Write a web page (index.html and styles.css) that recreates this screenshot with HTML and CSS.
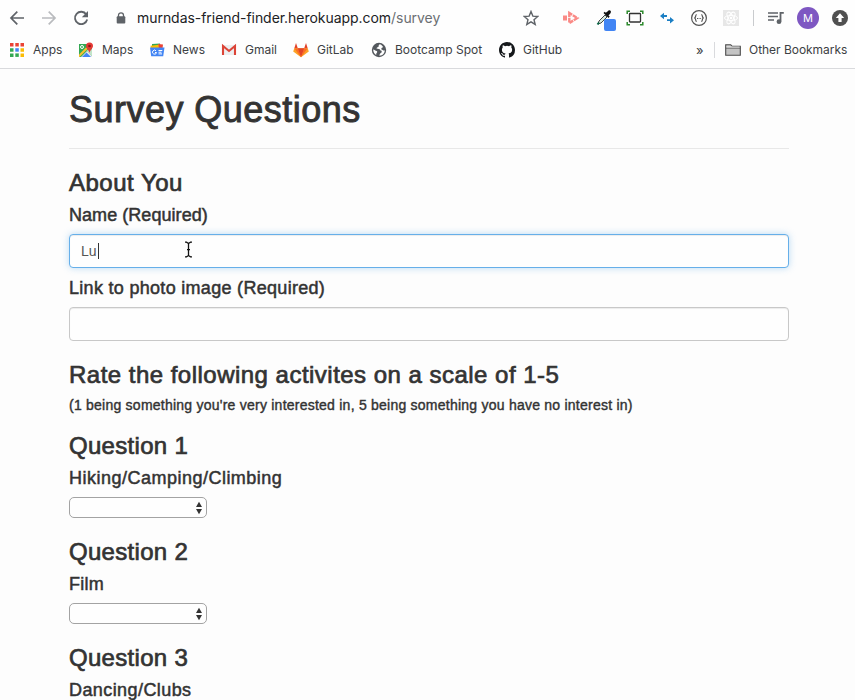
FILE: index.html
```html
<!DOCTYPE html>
<html lang="en">
<head>
<meta charset="utf-8">
<title>Survey</title>
<link rel="stylesheet" href="styles.css">
</head>
<body>
<header class="chrome">
  <div class="toolbar">
    <span class="cell"><svg width="16" height="16" viewBox="0 0 16 16" fill="none" stroke="#5f6368" stroke-width="1.7"><path d="M15 8H2.500M8.300 1.700 2 8l6.300 6.300"/></svg></span>
    <span class="cell"><svg width="16" height="16" viewBox="0 0 16 16" fill="none" stroke="#b9bbbe" stroke-width="1.7"><path d="M1 8h12.500M7.700 1.700 14 8l-6.300 6.300"/></svg></span>
    <span class="cell"><svg width="16" height="16" viewBox="0 0 16 16"><path d="M13.300 4.400A6.200 6.200 0 1 0 14.200 9.500" fill="none" stroke="#5f6368" stroke-width="1.800"/><path d="M15 1v6.200H8.800z" fill="#5f6368"/></svg></span>
    <span class="lock"><svg width="10" height="12" viewBox="0 0 10 12"><path d="M2.500 5V3.300a2.500 2.500 0 0 1 5 0V5" fill="none" stroke="#5f6368" stroke-width="1.300"/><rect x="0.700" y="4.300" width="8.600" height="7.200" rx="1" fill="#5f6368"/></svg></span>
    <span class="url">murndas-friend-finder.herokuapp.com<span class="path">/survey</span></span>
    <span class="cell star"><svg width="16" height="16" viewBox="0 0 16 16"><path d="m8 1.500 1.850 4.600 4.950.35-3.800 3.200 1.200 4.800L8 11.800l-4.200 2.650L5 9.650l-3.800-3.200 4.950-.35z" fill="none" stroke="#5f6368" stroke-width="1.400"/></svg></span>
    <span class="cell"><svg width="18" height="16" viewBox="0 0 18 16"><path d="M1 5.500h4v5H1z" fill="#fa8a86"/><path d="M7.300 3v10L15.300 8z" fill="none" stroke="#fa8a86" stroke-width="2.400" stroke-dasharray="4.300 .8"/></svg></span>
    <span class="cell picker"><svg width="22" height="24" viewBox="0 0 22 24"><path d="m2 16 1-3 6-6 2 2-6 6z" fill="#d7eadf" stroke="#444" stroke-width="1"/><path d="m1.500 16.500 1.500-2" stroke="#0b6848" stroke-width="2"/><path d="m7.500 5 5 5 1.200-1.400-1.200-1.200 2-2.200c1.500-1.800-.7-3.800-2.400-2.300L9.800 4.800 8.700 3.700z" fill="#111"/><rect x="8" y="11" width="12" height="12" rx="2" fill="#4285f4"/></svg></span>
    <span class="cell"><svg width="18" height="16" viewBox="0 0 18 16" fill="none"><rect x="3.500" y="3.500" width="11" height="8.500" rx=".7" stroke="#333" stroke-width="1.300"/><path d="M1.200 4V1.200H4M14 1.200h2.800V4M1.200 12v2.800H4M14 14.800h2.800V12" stroke="#2d8a2d" stroke-width="1.500"/></svg></span>
    <span class="cell"><svg width="16" height="14" viewBox="0 0 16 14" fill="#1c7fc4"><path d="m1 5 4-3.200v2.300h3v1.800H5v2.300zM15 9.200 11 6v2.300H8v1.800h3v2.300z"/></svg></span>
    <span class="cell"><svg width="18" height="18" viewBox="0 0 18 18" fill="none" stroke="#555" stroke-width="1.200"><circle cx="9" cy="9" r="7.400"/><path d="M6.700 5.500c-1.300 0-.6 2.300-1.900 3.500 1.300 1 .6 3.500 1.900 3.500M11.300 5.500c1.300 0 .6 2.300 1.900 3.500-1.300 1-.6 3.500-1.900 3.500M7 9.500h1M8.600 9.500h.9M10.200 9.500h.9"/></svg></span>
    <span class="cell"><svg width="16" height="16" viewBox="0 0 16 16"><path fill="#e7e7e7" d="M0 0h16v16H0z"/><g fill="none" stroke="#fff"><ellipse cx="8" cy="8" rx="6.500" ry="2.600"/><ellipse cx="8" cy="8" rx="6.500" ry="2.600" transform="rotate(60 8 8)"/><ellipse cx="8" cy="8" rx="6.500" ry="2.600" transform="rotate(120 8 8)"/></g><circle cx="8" cy="8" r="1.300" fill="#fff"/></svg></span>
    <span class="divider"></span>
    <span class="cell"><svg width="18" height="14" viewBox="0 0 18 14"><path d="M1 2h10M1 5.500h10M1 9h6" stroke="#5f6368" stroke-width="1.700"/><path d="M13.500 10.500V1.900h3.300" fill="none" stroke="#5f6368" stroke-width="1.800"/><circle cx="12" cy="10.700" r="2.400" fill="#5f6368"/></svg></span>
    <span class="cell"><span class="avatar">M</span></span>
    <span class="cell last"><svg width="16" height="16" viewBox="0 0 16 16"><circle cx="8" cy="8" r="8" fill="#505050"/><path d="M8 3.300 3.800 8h2.600v4h3.200V8h2.600z" fill="#fff"/></svg></span>
  </div>
  <nav class="bookmarks">
    <a class="bm apps"><svg width="16" height="16" viewBox="0 0 16 16"><path fill="#ea4335" d="M1 1h3.500v3.500H1zM6.300 1h3.500v3.500H6.300zM11.500 1H15v3.500h-3.500z"/><path fill="#34a853" d="M1 6.200h3.500v3.500H1zM1 11.400h3.500v3.500H1z"/><path fill="#4285f4" d="M6.300 6.200h3.500v3.500H6.300z"/><path fill="#34a853" d="M6.300 11.400h3.500v3.500H6.300z"/><path fill="#fbbc05" d="M11.500 6.200H15v3.500h-3.500zM11.500 11.400H15v3.500h-3.500z"/></svg><span>Apps</span></a>
    <a class="bm maps"><svg width="16" height="16" viewBox="0 0 16 16"><path fill="#34a853" d="M1 2h13v13H1z"/><path fill="#e8eaed" d="m3 15 6-6 5 5v1z"/><path fill="#4285f4" d="m4 15 4.500-4.500L13 15z"/><path fill="#fbc02d" d="m1 12.500 7-7 1.500 1.500-8 8H1z"/><path fill="#fff" d="m8.500 8.500 6 6V7z" opacity=".7"/><circle cx="4" cy="5" r="1.500" fill="none" stroke="#fff"/><path fill="#e53935" d="M11.500.5a3.500 3.500 0 0 1 3.500 3.500c0 2.500-2.600 3.200-3.500 7C10.600 7.200 8 6.500 8 4A3.500 3.500 0 0 1 11.500.5z"/><circle cx="11.500" cy="4" r="1.300" fill="#8b1710"/></svg><span>Maps</span></a>
    <a class="bm news"><svg width="16" height="16" viewBox="0 0 16 16"><path fill="#34a853" d="m3 2 8-.5.500 5H3z"/><path fill="#ea4335" d="m9 2 5 .5-.5 4H9z"/><path fill="#fbbc05" d="m1.500 3.800 8-1L10 7H2z"/><path fill="#4285f4" d="M1 5.500h14.500l-1.300 8.700H2.200z"/><path d="M9.500 8.500h3.800M9.500 10.200h3M9.500 11.900h3.500" stroke="#fff"/><path d="M7 8.800a2 2 0 1 0 .5 1.700H6" fill="none" stroke="#fff"/></svg><span>News</span></a>
    <a class="bm gmail"><svg width="16" height="16" viewBox="0 0 16 16"><path fill="#eceff1" d="M2 3h12v10H2z"/><path d="M2 13V4l6 5 6-5v9" fill="none" stroke="#dc4437" stroke-width="2.100"/></svg><span>Gmail</span></a>
    <a class="bm gitlab"><svg width="16" height="16" viewBox="0 0 16 16"><path fill="#e24329" d="M3 1 1.300 6.200h13.400L13 1l-1.800 5.200H4.800z"/><path fill="#fca326" d="M1.300 6.200.2 9.500 8 15.200l7.800-5.700-1.100-3.300z"/><path fill="#fc6d26" d="M1.300 6.200h3.500L8 15.200zM14.700 6.200h-3.500L8 15.200z"/><path fill="#e24329" d="M4.800 6.200h6.400L8 15.200z"/></svg><span>GitLab</span></a>
    <a class="bm bootcamp"><svg width="16" height="16" viewBox="0 0 16 16"><circle cx="8" cy="8" r="7.200" fill="#54585d"/><path fill="#fff" d="M9 2.200c-1 .4-1.600 1.100-1.200 2-.2 1.100-2.300.8-2.300 2.200 1.400.5 3.500.2 3.700 1.700.4 1 1.500.3 1.500 1.400.3 1-1 1.300-1.600 2.200l-1 1.900c3.500.2 5.600-2.400 5.700-5.400-1.400.7-2.200-.5-3.300-.8-.6-1 .5-1.800 1.600-2.100C11.600 3.900 10.500 2.500 9 2.200zM2.200 7.500c1.400.1 2.100 1.500 3.500 1.600.9.800.5 1.700-.4 2.300l-.1 1.700C3.400 12 2.200 10 2.200 7.500z"/></svg><span>Bootcamp Spot</span></a>
    <a class="bm github"><svg width="16" height="16" viewBox="0 0 16 16"><path fill="#15181b" d="M8 0C3.580 0 0 3.580 0 8c0 3.540 2.290 6.530 5.470 7.590.4.070.55-.17.55-.38 0-.19-.01-.82-.01-1.490-2.010.37-2.530-.49-2.690-.94-.09-.23-.48-.94-.82-1.130-.28-.15-.68-.52-.01-.53.63-.01 1.080.58 1.230.82.72 1.210 1.870.87 2.330.66.07-.52.28-.87.51-1.070-1.780-.2-3.640-.89-3.640-3.950 0-.87.31-1.590.82-2.150-.08-.2-.36-1.020.08-2.120 0 0 .67-.21 2.200.82a7.600 7.600 0 0 1 4 0c1.530-1.040 2.200-.82 2.200-.82.44 1.100.16 1.920.08 2.120.51.56.82 1.270.82 2.150 0 3.070-1.870 3.750-3.650 3.950.29.25.54.73.54 1.480 0 1.070-.01 1.930-.01 2.200 0 .21.150.46.55.38A8 8 0 0 0 16 8c0-4.420-3.580-8-8-8z"/></svg><span>GitHub</span></a>
    <span class="more">»</span>
    <span class="bm-divider"></span>
    <a class="bm other"><svg width="16" height="14" viewBox="0 0 16 14"><path d="M.7 12.300V1.700h5l1.500 1.700h8.100v8.900z" fill="#c4c4c4" stroke="#4c4c4c" stroke-width="1.100"/><path d="M.7 5h14.600" stroke="#4c4c4c"/><path d="M1.300 4h13.400" stroke="#eee"/></svg><span>Other Bookmarks</span></a>
  </nav>
</header>
<main class="survey">
  <h1>Survey Questions</h1>
  <hr>
  <h3 class="about">About You</h3>
  <h4 class="l-name">Name (Required)</h4>
  <div class="field focused"><span>Lu</span><i class="caret"></i>
    <svg class="pointer" width="9" height="17" viewBox="0 0 9 17" fill="none" stroke="#111" stroke-width="1.300"><path d="M1 1.200h1.500l2 1.300 2-1.300H8M1 15.800h1.500l2-1.300 2 1.300H8M4.500 2.500v12M3 8.700h3"/></svg>
  </div>
  <h4 class="l-photo">Link to photo image (Required)</h4>
  <div class="field"></div>
  <h3 class="rate">Rate the following activites on a scale of 1-5</h3>
  <h5>(1 being something you're very interested in, 5 being something you have no interest in)</h5>
  <section>
    <h3 class="q">Question 1</h3>
    <h4 class="hiking">Hiking/Camping/Climbing</h4>
    <div class="select"><svg width="8" height="14" viewBox="0 0 8 14" fill="#333"><path d="M4 .7 7 6H1zM4 13.300 1 8h6z"/></svg></div>
  </section>
  <section>
    <h3 class="q">Question 2</h3>
    <h4 class="film">Film</h4>
    <div class="select"><svg width="8" height="14" viewBox="0 0 8 14" fill="#333"><path d="M4 .7 7 6H1zM4 13.300 1 8h6z"/></svg></div>
  </section>
  <section class="final">
    <h3 class="q">Question 3</h3>
    <h4 class="dancing">Dancing/Clubs</h4>
  </section>
</main>
</body>
</html>
```
FILE: styles.css
```css
* { box-sizing: border-box; }
html, body { height: 700px; overflow: hidden; }
body { margin: 0; background: #fdfdfd; color: #333; font-family: "Liberation Sans", sans-serif; }
svg { display: block; flex: none; }

.chrome { height: 69px; background: #fefefe; border-bottom: 1px solid #d9dadd; font-family: Inter, sans-serif; }
.toolbar { display: flex; align-items: center; height: 36px; padding-left: 1px; }
.cell { display: flex; align-items: center; justify-content: center; flex: none; width: 32px; height: 36px; }
.lock { width: 40px; padding-left: 19px; flex: none; }
.url { width: 378px; flex: none; font-size: 14px; line-height: 20px; letter-spacing: -0.045px; color: #202124; white-space: nowrap; }
.path { color: #6b6f73; }
.star { margin-right: 8px; }
.picker { padding: 4px 0 0 8px; }
.divider { flex: none; width: 1px; height: 16px; margin: 0 6px; background: #c9cbce; }
.avatar { width: 22px; height: 22px; border-radius: 50%; background: #7e57c2; color: #fff; font-size: 11px; line-height: 22px; text-align: center; }
.last { width: 31px; padding-left: 1px; }

.bookmarks { display: flex; align-items: center; height: 28px; padding-left: 9px; font-size: 12px; line-height: 16px; color: #3c4043; }
.bm { display: flex; align-items: center; gap: 8px; flex: none; white-space: nowrap; }
.apps { width: 69px; }
.maps { width: 71px; }
.news { width: 72px; }
.gmail { width: 72px; }
.gitlab { width: 78px; }
.bootcamp { width: 128px; }
.github { width: 197px; }
.more { width: 18px; font-size: 13px; }
.bm-divider { width: 1px; height: 16px; margin-right: 10px; background: #d9dadd; }
.other { letter-spacing: -0.03px; }

.survey { width: 720px; margin-left: 69px; padding-top: 21px; }
h1, h3, h4, h5 { margin: 0; font-weight: 400; white-space: nowrap; -webkit-text-stroke: 0.5px #333; }
h1 { font-size: 36px; line-height: 39px; letter-spacing: 0.47px; -webkit-text-stroke-width: 0.9px; }
hr { height: 1px; margin: 19px 0 21px; border: 0; background: #e8e8e8; }
h3 { font-size: 24px; line-height: 26px; -webkit-text-stroke-width: 0.7px; }
h4 { margin-top: 9px; font-size: 18px; line-height: 20px; }
h5 { margin: 10px 0 20px; font-size: 14px; line-height: 15px; letter-spacing: 0.238px; -webkit-text-stroke-width: 0.4px; }
.about { letter-spacing: 0.5px; }
.l-name { letter-spacing: 0.05px; }
.l-photo { margin-top: 10px; letter-spacing: 0.3px; }
.field { position: relative; display: flex; align-items: center; height: 34px; margin-top: 9px; padding: 0 12px; border: 1px solid #c8c8c8; border-radius: 4px; background: #fefefe; box-shadow: inset 0 1px 1px rgba(0,0,0,.075); font-size: 14px; color: #555; }
.focused { padding-left: 11px; border-color: #66afe9; box-shadow: inset 0 1px 1px rgba(0,0,0,.075), 0 0 7px rgba(102,175,233,.45); }
.caret { width: 1px; height: 16px; margin-left: 1px; background: #333; }
.pointer { position: absolute; left: 114px; top: 6px; }
.rate { margin-top: 21px; letter-spacing: 0.48px; }
section { height: 106px; }
.final { height: 55px; }
.q { letter-spacing: 0.3px; }
.hiking { letter-spacing: 0.49px; }
.film { letter-spacing: 0.25px; }
.dancing { letter-spacing: 0.42px; }
.select { display: flex; align-items: center; justify-content: flex-end; width: 138px; height: 21px; margin-top: 9px; padding-right: 3px; border: 1px solid #a3a3a3; border-radius: 5px; background: #fefefe; }
```
